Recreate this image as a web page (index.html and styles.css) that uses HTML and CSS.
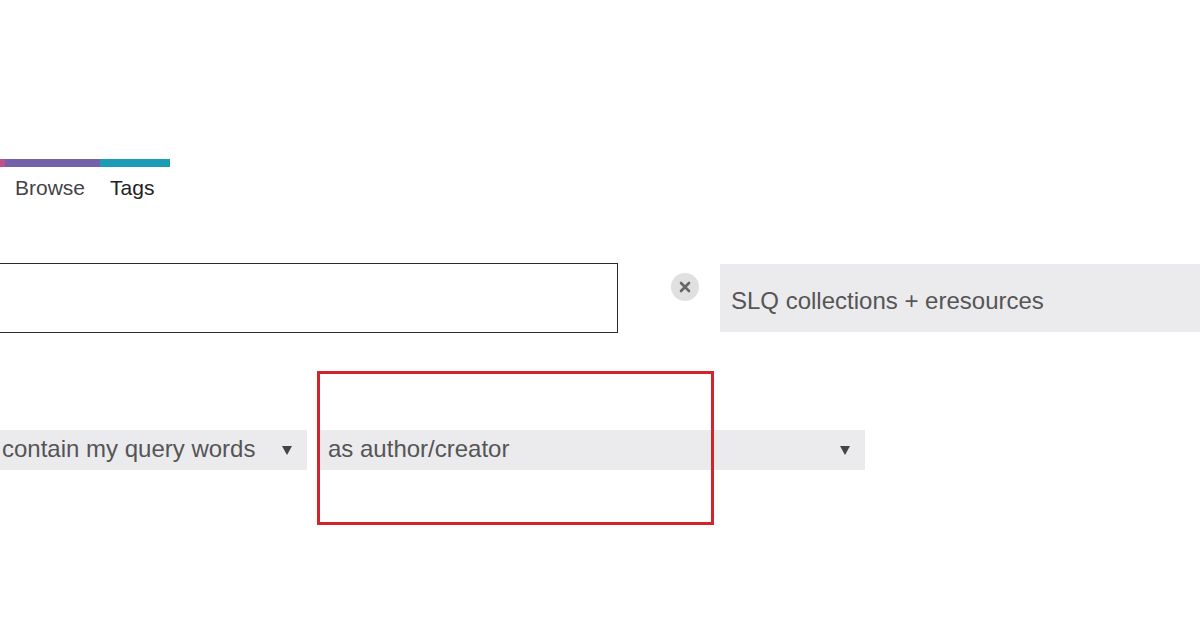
FILE: index.html
```html
<!DOCTYPE html>
<html lang="en">
<head>
  <meta charset="UTF-8">
  <meta name="viewport" content="width=device-width, initial-scale=1.0">
  <title>Search</title>
  <link rel="stylesheet" href="styles.css">
</head>
<body>
  <div id="page">
    <div class="brand-bar">
      <span class="seg seg-pink"></span>
      <span class="seg seg-purple"></span>
      <span class="seg seg-teal"></span>
    </div>

    <nav class="nav">
      <a href="#" class="nav-link">Browse</a>
      <a href="#" class="nav-link nav-link-dark">Tags</a>
    </nav>

    <div class="search-row">
      <div class="query-box"></div>
      <button class="clear-button" aria-label="Clear">
        <svg width="12" height="12" viewBox="0 0 12 12">
          <path d="M2 2 L10 10 M10 2 L2 10" stroke="#666" stroke-width="2.6" stroke-linecap="round"/>
        </svg>
      </button>
      <div class="scope-box">SLQ collections + eresources</div>
    </div>

    <div class="filter-row">
      <div class="select select-match">
        <span>contain my query words</span>
        <svg class="caret" width="10" height="9" viewBox="0 0 10 9"><path d="M0 0 H10 L5 9 Z" fill="#444"/></svg>
      </div>
      <div class="select select-field">
        <span>as author/creator</span>
        <svg class="caret" width="10" height="9" viewBox="0 0 10 9"><path d="M0 0 H10 L5 9 Z" fill="#444"/></svg>
      </div>
      <div class="highlight"></div>
    </div>
  </div>
</body>
</html>
```

FILE: styles.css
```css
body {
  margin: 0;
  background-color: #ffffff;
  font-family: "Liberation Sans", Arial, sans-serif;
  overflow: hidden;
}

#page {
  width: 1200px;
  height: 630px;
  padding-top: 159px;
  box-sizing: border-box;
  overflow: hidden;
}

.brand-bar {
  display: flex;
  width: 170px;
  height: 8px;
}

.seg-pink {
  width: 5px;
  background-color: #c05088;
}

.seg-purple {
  width: 95px;
  background-color: #7561a9;
}

.seg-teal {
  flex: 1;
  background-color: #1b9bb6;
}

.nav {
  display: flex;
  gap: 25px;
  margin-top: 9px;
  padding-left: 15px;
  font-size: 21px;
  line-height: 24px;
}

.nav-link {
  color: #444;
  text-decoration: none;
}

.nav-link-dark {
  color: #222;
}

.search-row {
  display: flex;
  align-items: flex-start;
  margin-top: 63px;
  height: 70px;
}

.query-box {
  margin-left: -100px;
  width: 718px;
  height: 70px;
  box-sizing: border-box;
  border: 1px solid #2a2a2a;
  flex-shrink: 0;
}

.clear-button {
  display: flex;
  align-items: center;
  justify-content: center;
  flex-shrink: 0;
  width: 28px;
  height: 28px;
  margin-top: 10px;
  margin-left: 53px;
  padding: 0;
  border: none;
  border-radius: 50%;
  background-color: #e0e0e1;
  cursor: pointer;
}

.scope-box {
  flex: 1;
  height: 68px;
  margin-top: 1px;
  margin-left: 21px;
  padding: 22px 0 0 11px;
  box-sizing: border-box;
  background-color: #ebebed;
  color: #555;
  font-size: 24px;
  line-height: 30px;
}

.filter-row {
  position: relative;
  display: flex;
  margin-top: 97px;
  height: 40px;
}

.select {
  display: flex;
  align-items: center;
  justify-content: space-between;
  box-sizing: border-box;
  height: 40px;
  background-color: #ebebed;
  color: #555;
  font-size: 24px;
  line-height: 40px;
  flex-shrink: 0;
}

.select span {
  position: relative;
  top: -1px;
}

.select-match {
  margin-left: -10px;
  width: 317px;
  padding: 0 15px 0 12px;
}

.select-field {
  margin-left: 13px;
  width: 545px;
  padding: 0 15px 0 8px;
}

/* annotation drawn over the screenshot */
.highlight {
  position: absolute;
  left: 317px;
  top: -59px;
  width: 397px;
  height: 154px;
  box-sizing: border-box;
  border: 3px solid #d3232b;
}
```
